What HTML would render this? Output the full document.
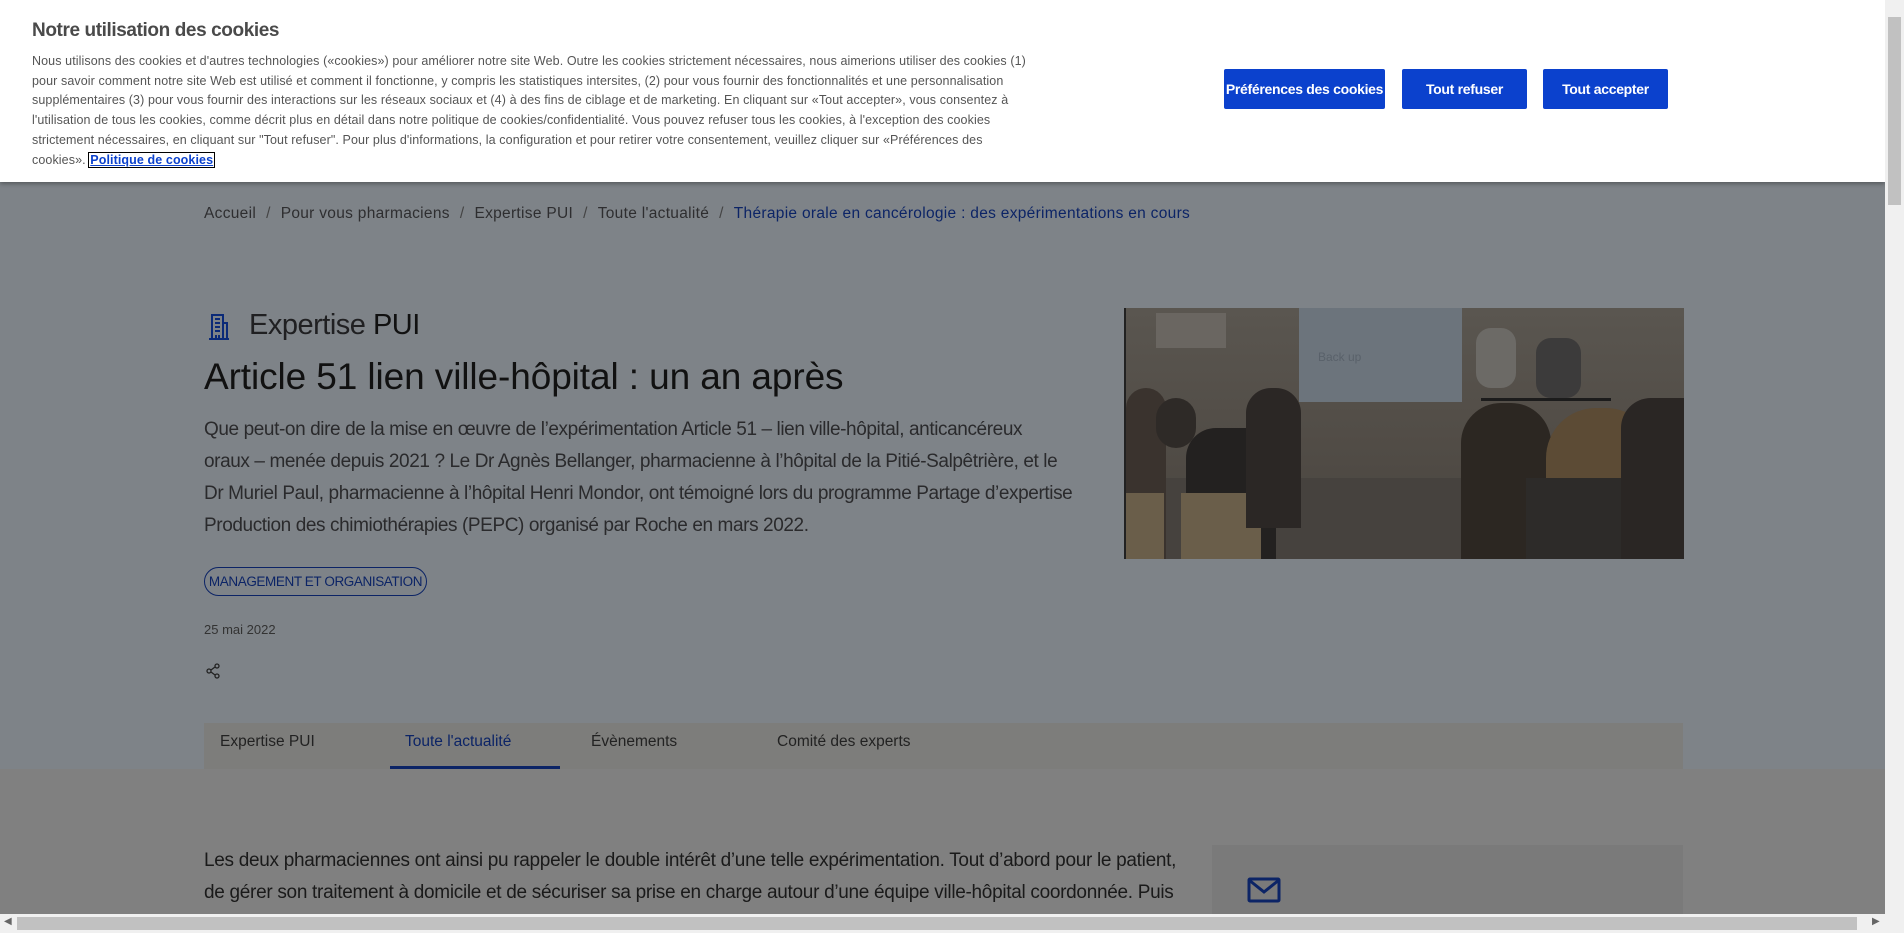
<!DOCTYPE html>
<html><head><meta charset="utf-8">
<style>
*{margin:0;padding:0;box-sizing:border-box}
body{width:1904px;height:933px;overflow:hidden;background:#808080;font-family:"Liberation Sans",sans-serif;position:relative}
.abs{position:absolute}
.hero{left:0;top:182px;width:1885px;height:587px;background:#7e8388}
.banner{left:0;top:0;width:1885px;height:182px;background:#fff;box-shadow:0 2px 4px rgba(0,0,0,.3)}
.btn{position:absolute;top:69px;height:40px;background:#0b41cd;color:#fff;font-weight:bold;font-size:14px;display:flex;align-items:center;justify-content:center;border-radius:2px;letter-spacing:-0.3px}
.crumb{top:205px;left:204px;font-size:15.5px;color:#2e2e30;white-space:nowrap;letter-spacing:0.3px}
.crumb span.s{margin:0 10px;color:#444}
.nw{white-space:nowrap}
</style></head><body>
<div class="abs hero"></div>

<div class="abs crumb">Accueil<span class="s">/</span>Pour vous pharmaciens<span class="s">/</span>Expertise PUI<span class="s">/</span>Toute l'actualité<span class="s">/</span><span style="color:#0c2466">Thérapie orale en cancérologie : des expérimentations en cours</span></div>

<svg class="abs" style="left:208px;top:313px" width="22" height="28" viewBox="0 0 22 28"><g fill="none" stroke="#0b2a78" stroke-width="2"><rect x="4" y="2" width="11" height="24"/><path d="M15 10h4v16M1 26h20M7 6h5M7 10h5M7 14h5M7 18h5M8 22v4M11 22v4"/></g></svg>
<div class="abs" style="left:249px;top:309px;font-size:29px;color:#202022;letter-spacing:-0.5px">Expertise <b style="font-weight:normal;color:#111">PUI</b></div>
<div class="abs" style="left:204px;top:356px;font-size:37px;color:#111;letter-spacing:-0.1px">Article 51 lien ville-hôpital : un an après</div>
<div class="abs nw" style="left:204px;top:414px;font-size:19px;line-height:32px;color:#2a2a2c;letter-spacing:-0.4px">Que peut-on dire de la mise en œuvre de l’expérimentation Article 51 – lien ville-hôpital, anticancéreux<br>oraux – menée depuis 2021 ? Le Dr Agnès Bellanger, pharmacienne à l’hôpital de la Pitié-Salpêtrière, et le<br>Dr Muriel Paul, pharmacienne à l’hôpital Henri Mondor, ont témoigné lors du programme Partage d’expertise<br>Production des chimiothérapies (PEPC) organisé par Roche en mars 2022.</div>
<div class="abs" style="left:204px;top:567px;width:223px;height:29px;border:1.5px solid #0c2466;border-radius:15px;color:#0c2466;font-size:13.5px;display:flex;align-items:center;justify-content:center;letter-spacing:-0.4px">MANAGEMENT ET ORGANISATION</div>
<div class="abs" style="left:204px;top:622px;font-size:13px;color:#333">25 mai 2022</div>
<svg class="abs" style="left:205px;top:663px" width="16" height="16" viewBox="0 0 16 16"><g fill="none" stroke="#222" stroke-width="1.3"><circle cx="12" cy="3" r="2"/><circle cx="4" cy="8" r="2"/><circle cx="12" cy="13" r="2"/><path d="M6 7l4-3M6 9l4 3"/></g></svg>

<div class="abs" style="left:1124px;top:308px;width:560px;height:251px;overflow:hidden;background:linear-gradient(#5a5650,#514c46 55%,#48443f);border-left:2px solid #222">
 <div class="abs" style="left:173px;top:0;width:163px;height:94px;background:#6c747c"></div>
 <div class="abs" style="left:192px;top:42px;font-size:12px;color:#59616a">Back up</div>
 <div class="abs" style="left:30px;top:5px;width:70px;height:35px;background:#6a6661"></div>
 <div class="abs" style="left:0;top:170px;width:560px;height:81px;background:#46423e"></div>
 <div class="abs" style="left:60px;top:120px;width:90px;height:131px;background:#232120;border-radius:30px 30px 0 0"></div>
 <div class="abs" style="left:0;top:80px;width:40px;height:171px;background:#3a332e;border-radius:20px 20px 0 0"></div>
 <div class="abs" style="left:30px;top:90px;width:40px;height:50px;background:#2e2a27;border-radius:20px"></div>
 <div class="abs" style="left:55px;top:185px;width:80px;height:66px;background:#6a5e4a"></div>
 <div class="abs" style="left:0;top:185px;width:38px;height:66px;background:#6a5e4a"></div>
 <div class="abs" style="left:120px;top:80px;width:55px;height:140px;background:#2b2725;border-radius:25px 25px 0 0"></div>
 <div class="abs" style="left:350px;top:20px;width:40px;height:60px;background:#6c6a66;border-radius:15px"></div>
 <div class="abs" style="left:410px;top:30px;width:45px;height:60px;background:#3c3b3b;border-radius:15px"></div>
 <div class="abs" style="left:355px;top:90px;width:130px;height:3px;background:#1c1c1c"></div>
 <div class="abs" style="left:335px;top:95px;width:90px;height:156px;background:#2c2722;border-radius:40px 40px 0 0"></div>
 <div class="abs" style="left:420px;top:100px;width:110px;height:151px;background:#5c4b35;border-radius:50px 50px 0 0"></div>
 <div class="abs" style="left:400px;top:170px;width:110px;height:81px;background:#2d2b29"></div>
 <div class="abs" style="left:495px;top:90px;width:65px;height:161px;background:#2a2624;border-radius:30px 0 0 0"></div>
</div>

<div class="abs" style="left:204px;top:723px;width:1479px;height:46px;background:#7d7d7b"></div>
<div class="abs" style="left:220px;top:733px;font-size:15.5px;color:#222">Expertise PUI</div>
<div class="abs" style="left:405px;top:733px;font-size:15.5px;color:#0c2466">Toute l'actualité</div>
<div class="abs" style="left:591px;top:733px;font-size:15.5px;color:#222">Évènements</div>
<div class="abs" style="left:777px;top:733px;font-size:15.5px;color:#222">Comité des experts</div>
<div class="abs" style="left:390px;top:766px;width:170px;height:3px;background:#0c2466"></div>

<div class="abs nw" style="left:204px;top:845px;font-size:19px;line-height:32px;color:#1a1a1a;letter-spacing:-0.3px">Les deux pharmaciennes ont ainsi pu rappeler le double intérêt d’une telle expérimentation. Tout d’abord pour le patient,<br>de gérer son traitement à domicile et de sécuriser sa prise en charge autour d’une équipe ville-hôpital coordonnée. Puis</div>
<div class="abs" style="left:1212px;top:845px;width:471px;height:70px;background:#7a7a7a"></div>
<svg class="abs" style="left:1247px;top:877px" width="34" height="26" viewBox="0 0 34 26"><g fill="none" stroke="#0c2466" stroke-width="3"><rect x="2" y="2" width="30" height="22" rx="1"/><path d="M2 3l15 12 15-12"/></g></svg>

<div class="abs banner">
 <div class="abs" style="left:32px;top:20px;font-size:19px;font-weight:bold;color:#4a4a4a;letter-spacing:-0.4px">Notre utilisation des cookies</div>
 <div class="abs nw" style="left:32px;top:52px;font-size:12.5px;line-height:19.7px;color:#555;letter-spacing:0.1px">Nous utilisons des cookies et d'autres technologies («cookies») pour améliorer notre site Web. Outre les cookies strictement nécessaires, nous aimerions utiliser des cookies (1)<br>pour savoir comment notre site Web est utilisé et comment il fonctionne, y compris les statistiques intersites, (2) pour vous fournir des fonctionnalités et une personnalisation<br>supplémentaires (3) pour vous fournir des interactions sur les réseaux sociaux et (4) à des fins de ciblage et de marketing. En cliquant sur «Tout accepter», vous consentez à<br>l'utilisation de tous les cookies, comme décrit plus en détail dans notre politique de cookies/confidentialité. Vous pouvez refuser tous les cookies, à l'exception des cookies<br>strictement nécessaires, en cliquant sur "Tout refuser". Pour plus d'informations, la configuration et pour retirer votre consentement, veuillez cliquer sur «Préférences des<br>cookies». <span style="color:#0b41cd;font-weight:bold;text-decoration:underline;outline:1px solid #000;padding:0 1px">Politique de cookies</span></div>
 <div class="btn" style="left:1224px;width:161px">Préférences des cookies</div>
 <div class="btn" style="left:1402px;width:125px">Tout refuser</div>
 <div class="btn" style="left:1543px;width:125px">Tout accepter</div>
</div>

<div class="abs" style="left:1885px;top:0;width:19px;height:933px;background:#f0f0f0"></div>
<div class="abs" style="left:1888px;top:17px;width:13px;height:188px;background:#c1c1c1"></div>
<div class="abs" style="left:0;top:914px;width:1904px;height:19px;background:#f0f0f0"></div>
<div class="abs" style="left:17px;top:917px;width:1840px;height:13px;background:#c1c1c1"></div>
<div class="abs" style="left:4px;top:916px;font-size:10px;color:#666">◀</div>
<div class="abs" style="left:1872px;top:916px;font-size:10px;color:#666">▶</div>
</body></html>
